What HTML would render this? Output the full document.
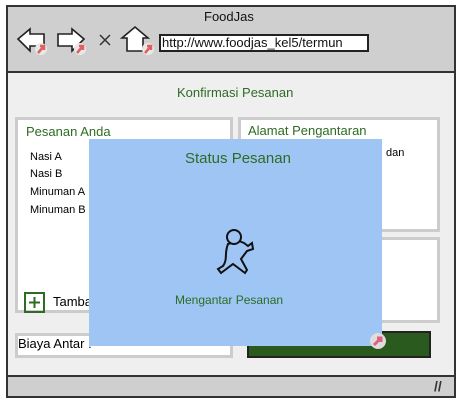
<!DOCTYPE html>
<html><head><meta charset="utf-8"><style>
body{margin:0;width:459px;height:407px;background:#fff;position:relative;overflow:hidden;font-family:"Comic Sans MS","Liberation Sans",sans-serif;}
.a{position:absolute;box-sizing:border-box}
.t{position:absolute;white-space:nowrap;font-size:12px}
</style></head><body>
<div class="a" style="left:6px;top:5px;width:450px;height:393px;border:2px solid #333;background:#efefef"></div>
<div class="a" style="left:6px;top:5px;width:450px;height:68px;border:2px solid #333;background:#cfcfcf"></div>
<div class="t" style="left:204px;top:9px;font-size:13px;color:#111">FoodJas</div>
<svg class="a" style="left:14px;top:24px" width="145" height="34" viewBox="0 0 145 34">
<g fill="#fff" stroke="#222" stroke-width="1.6">
<path d="M4 15 L16 5 L16 10 L30 10 L30 22 L16 22 L16 27 Z"/>
<path d="M70 15 L58 5 L58 10 L44 10 L44 22 L58 22 L58 27 Z"/>
<path d="M108 14 L121 3 L134 14 L129 14 L129 27 L113 27 L113 14 Z"/>
</g>
<g><circle cx="27" cy="25" r="6" fill="#e8e8e8"/><path d="M24 29 L30 22 M26 22 L30 22 L30 26" stroke="#e06060" stroke-width="2.5" fill="none"/>
<circle cx="66" cy="25" r="6" fill="#e8e8e8"/><path d="M63 29 L69 22 M65 22 L69 22 L69 26" stroke="#e06060" stroke-width="2.5" fill="none"/>
<circle cx="134" cy="25" r="6" fill="#e8e8e8"/><path d="M131 29 L137 22 M133 22 L137 22 L137 26" stroke="#e06060" stroke-width="2.5" fill="none"/></g>
<path d="M86 11 L96 21 M96 11 L86 21" stroke="#333" stroke-width="1.5"/>
</svg>
<div class="a" style="left:159px;top:34px;width:210px;height:18px;border:2px solid #222;background:#fff"></div>
<div class="t" style="left:162px;top:35px;font-size:13px;color:#111;width:205px;overflow:hidden">http://www.foodjas_kel5/termun</div>
<div class="t" style="left:177px;top:85px;color:#2e6b23;font-size:13px">Konfirmasi Pesanan</div>
<div class="a" style="left:15px;top:117px;width:218px;height:196px;border:3px solid #ccc;background:#fff"></div>
<div class="t" style="left:26px;top:124px;color:#2e6b23;font-size:13px">Pesanan Anda</div>
<div class="t" style="left:30px;top:151px;font-size:11px">Nasi A</div>
<div class="t" style="left:30px;top:168px;font-size:11px">Nasi B</div>
<div class="t" style="left:30px;top:186px;font-size:11px">Minuman A</div>
<div class="t" style="left:30px;top:204px;font-size:11px">Minuman B</div>
<div class="a" style="left:24px;top:292px;width:21px;height:21px;border:2px solid #2e6b23"></div>
<svg class="a" style="left:24px;top:292px" width="21" height="21"><path d="M10.5 5 V16 M5 10.5 H16" stroke="#2e6b23" stroke-width="2"/></svg>
<div class="t" style="left:53px;top:294px;font-size:13px">Tambah</div>
<div class="a" style="left:238px;top:117px;width:202px;height:115px;border:3px solid #ccc;background:#fff"></div>
<div class="t" style="left:248px;top:123px;color:#2e6b23;font-size:13px">Alamat Pengantaran</div>
<div class="t" style="left:386px;top:147px;font-size:11px">dan</div>
<div class="a" style="left:238px;top:237px;width:202px;height:86px;border:3px solid #ccc;background:#fff"></div>
<div class="a" style="left:15px;top:333px;width:218px;height:25px;border:3px solid #ccc;background:#fff"></div>
<div class="t" style="left:18px;top:336px;font-size:13px">Biaya Antar :</div>
<div class="a" style="left:247px;top:331px;width:184px;height:27px;border:2px solid #222;background:#2b5a1e"></div>
<div class="a" style="left:89px;top:139px;width:293px;height:207px;background:#9fc5f5"></div>
<div class="t" style="left:185px;top:150px;color:#2e6b23;font-size:15px">Status Pesanan</div>
<svg class="a" style="left:214px;top:226px" width="46" height="52" viewBox="0 0 46 52">
<path d="M14 18 C10 28 14 33 9 40 L4 43 L7 47 L19 38 L31 47 L33 44 L27 33 L33 25 L39 23 L38 17 L34 20 L30 17 L25 15 Z" fill="none" stroke="#111" stroke-width="2"/>
<circle cx="20" cy="11" r="7" fill="#9fc5f5" stroke="#111" stroke-width="2"/>
</svg>
<div class="t" style="left:175px;top:293px;color:#2e6b23;font-size:12px">Mengantar Pesanan</div>
<svg class="a" style="left:368px;top:331px" width="20" height="20"><circle cx="10" cy="10" r="8" fill="#ddd"/><path d="M6 14 L13 7 M9 7 L13 7 L13 11" stroke="#e06080" stroke-width="3" fill="none"/></svg>
<div class="a" style="left:6px;top:375px;width:450px;height:23px;border:2px solid #333;background:#cfcfcf"></div>
<div class="t" style="left:434px;top:378px;font-size:14px;font-weight:bold;color:#333">//</div>
</body></html>
